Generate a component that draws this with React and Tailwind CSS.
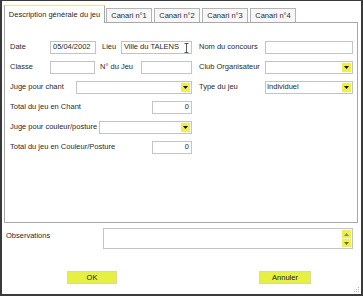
import React from "react";

const font = { fontFamily: '"Liberation Sans", Arial, sans-serif' };

function Input({ w, value = "", right = false, children }) {
  return (
    <div
      className={`relative h-[13px] border border-[#c4c4c4] bg-white flex items-center text-[7.5px] leading-none text-[#2a2a2a] ${right ? "justify-end pr-[2px]" : "pl-[2px]"}`}
      style={{ width: w }}
    >
      {value}
      {children}
    </div>
  );
}

function Arrow({ up = false, color = "#111" }) {
  return (
    <svg width="5" height="3" viewBox="0 0 5 3">
      {up ? (
        <polygon points="0,3 5,3 2.5,0" fill={color} />
      ) : (
        <polygon points="0,0 5,0 2.5,3" fill={color} />
      )}
    </svg>
  );
}

function Combo({ w, value = "" }) {
  return (
    <div
      className="h-[13px] border border-[#c4c4c4] bg-white flex items-center text-[7.5px] leading-none text-[#2a2a2a] pl-[1px] pr-[1px]"
      style={{ width: w }}
    >
      <span className="flex-1">{value}</span>
      <div className="w-[9px] h-[9px] bg-[#eeee50] flex items-center justify-center">
        <Arrow />
      </div>
    </div>
  );
}

function Label({ w, children, className = "" }) {
  return (
    <div className={`text-[7.5px] leading-none text-[#2a2a2a] whitespace-nowrap ${className}`} style={{ width: w }}>
      {children}
    </div>
  );
}

function Row({ children }) {
  return <div className="flex items-center h-[20px]">{children}</div>;
}

export default function App() {
  return (
    <div
      className="w-[363px] h-[296px] bg-white border-t border-l-2 border-r-2 border-b-2 border-[#3a3a3a] relative pt-[4px] pl-[2px] pr-[3px]"
      style={font}
    >
      {/* Tabs */}
      <div className="flex items-end h-[17px]">
        <div className="relative z-10 w-[101px] h-[18px] -mb-[1px] bg-white border border-b-0 border-[#a8a8a8] border-t-[#dfe89a] flex items-center justify-center text-[7.5px] leading-none text-[#2a2a2a] whitespace-nowrap">
          Description générale du jeu
        </div>
        {["Canari n°1", "Canari n°2", "Canari n°3", "Canari n°4"].map((t, i) => (
          <div
            key={t}
            className={`w-[46px] h-[14px] bg-[#f7f7f7] border border-b-0 border-[#b4b4b4] flex items-center justify-center text-[7.5px] leading-none text-[#2a2a2a] whitespace-nowrap ${i === 0 ? "ml-[1px]" : "ml-[2px]"}`}
          >
            {t}
          </div>
        ))}
      </div>

      {/* Panel */}
      <div className="w-[354px] h-[201px] border border-[#a8a8a8] pt-[14px] pl-[5px]">
        <Row>
          <Label w={40}>Date</Label>
          <Input w={46} value="05/04/2002" />
          <Label w={19} className="ml-[6px]">Lieu</Label>
          <Input w={71} value="Ville du TALENS">
            <svg className="absolute right-[2px] top-[1px]" width="5" height="10" viewBox="0 0 5 10">
              <path d="M0.5 0.5 H4.5 M2.5 0.5 V9.5 M0.5 9.5 H4.5" stroke="#333" strokeWidth="0.8" fill="none" />
            </svg>
          </Input>
          <Label w={66} className="ml-[7px]">Nom du concours</Label>
          <Input w={88} />
        </Row>
        <Row>
          <Label w={40}>Classe</Label>
          <Input w={45} />
          <Label w={41} className="ml-[5px]">N° du Jeu</Label>
          <Input w={51} />
          <Label w={66} className="ml-[7px]">Club Organisateur</Label>
          <Combo w={88} />
        </Row>
        <Row>
          <Label w={66}>Juge pour chant</Label>
          <Combo w={116} />
          <Label w={66} className="ml-[7px]">Type du jeu</Label>
          <Combo w={88} value="Individuel" />
        </Row>
        <Row>
          <Label w={142}>Total du jeu en Chant</Label>
          <Input w={40} value="0" right />
        </Row>
        <Row>
          <Label w={89}>Juge pour couleur/posture</Label>
          <Combo w={93} />
        </Row>
        <Row>
          <Label w={142}>Total du jeu en Couleur/Posture</Label>
          <Input w={40} value="0" right />
        </Row>
      </div>

      {/* Observations */}
      <div className="flex items-start mt-[5px] pl-[2px]">
        <Label w={97} className="mt-[4px]">Observations</Label>
        <div className="w-[250px] h-[21px] border border-[#c4c4c4] bg-white flex justify-end pr-[1px] pt-[1px]">
          <div className="flex flex-col gap-[1px]">
            <div className="w-[9px] h-[8px] bg-[#eeee50] flex items-center justify-center">
              <Arrow up color="#8a8a60" />
            </div>
            <div className="w-[9px] h-[8px] bg-[#eeee50] flex items-center justify-center">
              <Arrow color="#6a6a40" />
            </div>
          </div>
        </div>
      </div>

      {/* Buttons */}
      <div className="flex mt-[22px]">
        <button className="ml-[63px] w-[50px] h-[13px] bg-[#e6f040] border border-[#d8dc9a] text-[7.5px] leading-none text-[#222]">
          OK
        </button>
        <button className="ml-[142px] w-[52px] h-[13px] bg-[#e6f040] border border-[#d8dc9a] text-[7.5px] leading-none text-[#222]">
          Annuler
        </button>
      </div>

      {/* Resize grip */}
      <svg className="absolute right-[1px] bottom-[1px]" width="6" height="6" viewBox="0 0 6 6">
        <rect x="4" y="0" width="1" height="1" fill="#b0b0b0" />
        <rect x="2" y="2" width="1" height="1" fill="#b0b0b0" />
        <rect x="4" y="2" width="1" height="1" fill="#b0b0b0" />
        <rect x="0" y="4" width="1" height="1" fill="#b0b0b0" />
        <rect x="2" y="4" width="1" height="1" fill="#b0b0b0" />
        <rect x="4" y="4" width="1" height="1" fill="#b0b0b0" />
      </svg>
    </div>
  );
}
